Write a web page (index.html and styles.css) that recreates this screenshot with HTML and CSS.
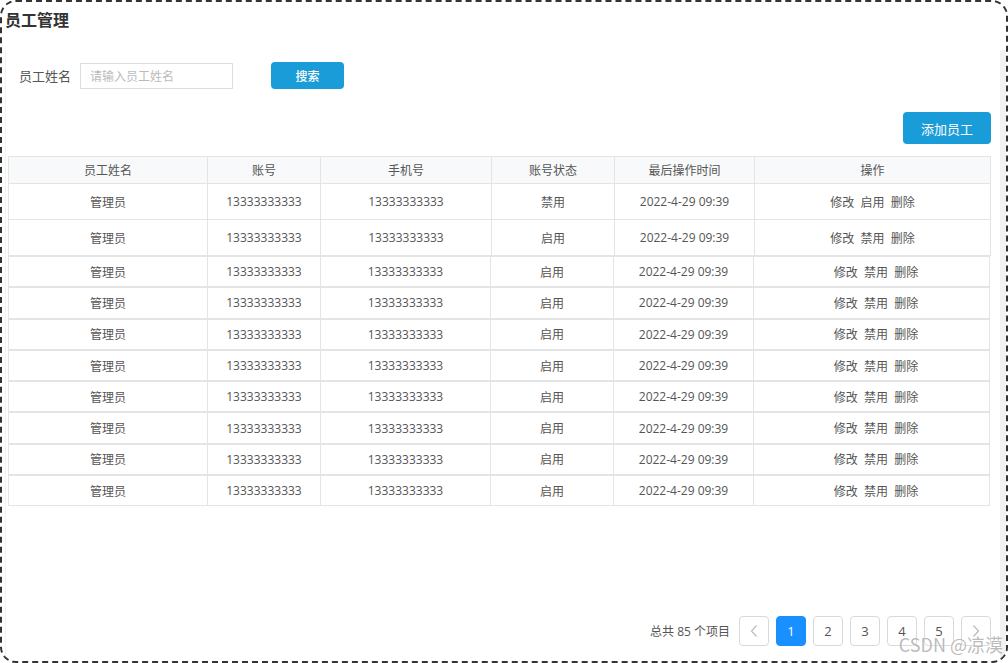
FILE: index.html
```html
<!DOCTYPE html>
<html lang="zh-CN">
<head>
    <meta charset="UTF-8">
    <title>员工管理</title>
    <link rel="stylesheet" href="styles.css">
</head>
<body>
    <div class="frame">
        <div class="title">员工管理</div>
        <div class="main">
            <div class="search">
                <span class="label">员工姓名</span>
                <input class="field" type="text" placeholder="请输入员工姓名">
                <button class="btn search-btn">搜索</button>
            </div>
            <div class="toolbar">
                <button class="btn add-btn">添加员工</button>
            </div>

            <table class="grid first">
                <colgroup>
                    <col style="width:199px"><col style="width:113px"><col style="width:171px">
                    <col style="width:123px"><col style="width:140px"><col>
                </colgroup>
                <tr class="head">
                    <th>员工姓名</th><th>账号</th><th>手机号</th><th>账号状态</th><th>最后操作时间</th><th>操作</th>
                </tr>
                <tr>
                    <td>管理员</td><td>13333333333</td><td>13333333333</td><td>禁用</td><td>2022-4-29 09:39</td><td>修改&nbsp;&nbsp;启用&nbsp;&nbsp;删除</td>
                </tr>
                <tr>
                    <td>管理员</td><td>13333333333</td><td>13333333333</td><td>启用</td><td>2022-4-29 09:39</td><td>修改&nbsp;&nbsp;禁用&nbsp;&nbsp;删除</td>
                </tr>
            </table>
            <div id="rows"></div>

            <div class="pager">
                <span class="total">总共 85 个项目</span>
                <span class="page arrow">
                    <svg width="10" height="14" viewBox="0 0 10 14"><path d="M7.5 1.5 L2.5 7 L7.5 12.5" fill="none" stroke="#bbb" stroke-width="1.2"/></svg>
                </span>
                <span class="page active">1</span>
                <span class="page">2</span>
                <span class="page">3</span>
                <span class="page">4</span>
                <span class="page">5</span>
                <span class="page arrow">
                    <svg width="10" height="14" viewBox="0 0 10 14"><path d="M2.5 1.5 L7.5 7 L2.5 12.5" fill="none" stroke="#bbb" stroke-width="1.2"/></svg>
                </span>
            </div>
        </div>
        <div class="mark">CSDN @凉漠</div>
    </div>
    <script>
        // the remaining rows are each their own little table, like the original page
        let rows = document.getElementById("rows");
        for (let i = 0; i < 8; i++) {
            rows.innerHTML += `
            <table class="grid single">
                <colgroup>
                    <col style="width:199px"><col style="width:113px"><col style="width:170px">
                    <col style="width:123px"><col style="width:140px"><col>
                </colgroup>
                <tr>
                    <td>管理员</td><td>13333333333</td><td>13333333333</td><td>启用</td><td>2022-4-29 09:39</td><td class="ops">修改&nbsp;&nbsp;禁用&nbsp;&nbsp;删除</td>
                </tr>
            </table>`;
        }
    </script>
</body>
</html>
```

FILE: styles.css
```css
*{
    margin: 0;
    padding: 0;
    box-sizing: border-box;
}
body{
    background-color: white;
    font-family: "Open Sans", "Noto Sans CJK SC", sans-serif;
    color: #555;
}
.frame{
    width: 1008px;
    height: 663px;
    border: 2px dashed #333;
    border-radius: 16px;
    display: flex;
    flex-direction: column;
    position: relative;
    overflow: hidden;
}
.title{
    height: 48px;
    padding: 5px 0 0 3px;
    font-family: "Noto Sans CJK SC", sans-serif;
    font-size: 16px;
    line-height: 24px;
    font-weight: bold;
    color: #333;
}
.main{
    flex: 1;
    margin-left: 3px;
    border-left: 1px solid #f0f0f0;
    border-right: 6px solid #f2f2f2;
    padding: 0 9px 15px 2px;
    display: flex;
    flex-direction: column;
}
.search{
    display: flex;
    align-items: center;
    margin-top: 12px;
    padding-left: 11px;
}
.label{
    font-family: "Noto Sans CJK SC", sans-serif;
    font-size: 13px;
    color: #555;
}
.field{
    width: 153px;
    height: 26px;
    margin-left: 9px;
    border: 1px solid #ddd;
    padding: 0 9px;
    font-family: "Noto Sans CJK SC", sans-serif;
    font-size: 12px;
    color: #555;
    outline: none;
}
.field::placeholder{
    color: #bbb;
}
.btn{
    border: none;
    border-radius: 4px;
    background-color: #1a9cd8;
    color: white;
    font-family: "Noto Sans CJK SC", sans-serif;
}
.search-btn{
    width: 73px;
    height: 27px;
    margin-left: 38px;
    font-size: 12px;
    font-weight: 500;
}
.toolbar{
    display: flex;
    justify-content: flex-end;
    margin-top: 23px;
}
.add-btn{
    width: 88px;
    height: 32px;
    font-size: 13px;
}
.grid{
    width: 983px;
    border-collapse: collapse;
    table-layout: fixed;
    font-size: 12px;
}
.first{
    margin-top: 12px;
}
.single{
    width: 982px;
}
.grid th, .grid td{
    border: 1px solid #e4e4e4;
    text-align: center;
    font-weight: normal;
    white-space: nowrap;
    color: #555;
}
.head th{
    height: 27px;
    background-color: #f8f9fa;
}
.first td{
    height: 36px;
}
.single td{
    height: 30.3px;
}
.single .ops{
    padding-left: 9px;
}
.pager{
    margin-top: auto;
    display: flex;
    align-items: center;
    justify-content: flex-end;
    gap: 7px;
}
.total{
    font-size: 12px;
    color: #555;
    margin-right: 2px;
}
.page{
    width: 30px;
    height: 30px;
    border: 1px solid #d9d9d9;
    border-radius: 4px;
    display: flex;
    align-items: center;
    justify-content: center;
    font-size: 13px;
    color: #555;
}
.page.active{
    background-color: #1890ff;
    border-color: #1890ff;
    color: white;
}
.mark{
    position: absolute;
    right: 3px;
    bottom: 4px;
    font-family: "Noto Sans CJK SC", sans-serif;
    font-size: 18px;
    color: rgba(120, 120, 120, 0.5);
    text-shadow: 0 0 2px white;
}
```
